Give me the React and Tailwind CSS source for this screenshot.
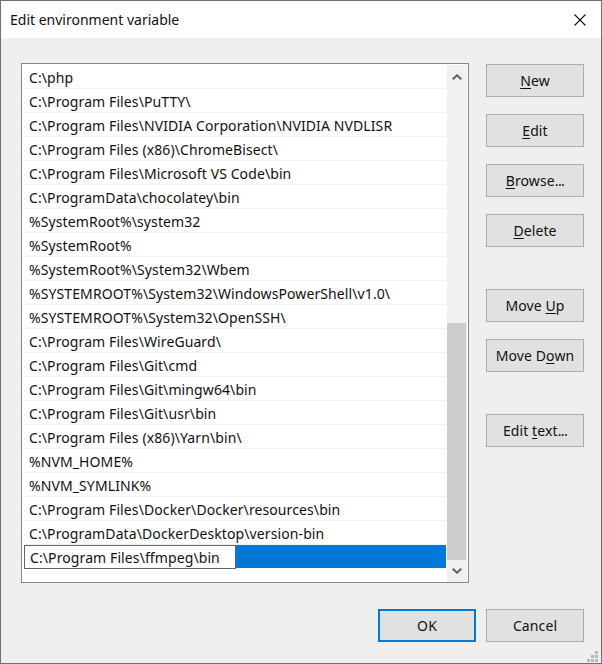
const rows = [
  "C:\\php",
  "C:\\Program Files\\PuTTY\\",
  "C:\\Program Files\\NVIDIA Corporation\\NVIDIA NVDLISR",
  "C:\\Program Files (x86)\\ChromeBisect\\",
  "C:\\Program Files\\Microsoft VS Code\\bin",
  "C:\\ProgramData\\chocolatey\\bin",
  "%SystemRoot%\\system32",
  "%SystemRoot%",
  "%SystemRoot%\\System32\\Wbem",
  "%SYSTEMROOT%\\System32\\WindowsPowerShell\\v1.0\\",
  "%SYSTEMROOT%\\System32\\OpenSSH\\",
  "C:\\Program Files\\WireGuard\\",
  "C:\\Program Files\\Git\\cmd",
  "C:\\Program Files\\Git\\mingw64\\bin",
  "C:\\Program Files\\Git\\usr\\bin",
  "C:\\Program Files (x86)\\Yarn\\bin\\",
  "%NVM_HOME%",
  "%NVM_SYMLINK%",
  "C:\\Program Files\\Docker\\Docker\\resources\\bin",
  "C:\\ProgramData\\DockerDesktop\\version-bin",
];

function Btn({ children, className = "", primary }) {
  return (
    <button
      className={`w-[98px] h-[33px] shrink-0 flex items-center justify-center bg-[#e1e1e1] text-[#111] tracking-[0.1px] ${
        primary ? "border-2 border-[#0078d7]" : "border border-[#adadad]"
      } ${className}`}
    >
      <span>{children}</span>
    </button>
  );
}

function Key({ children }) {
  return <u className="underline underline-offset-2 decoration-1">{children}</u>;
}

function Dots() {
  return <span className="tracking-[-0.6px]">...</span>;
}

function Grip() {
  const dots = [[9, 0], [9, 4], [5, 4], [9, 8], [5, 8], [1, 8]];
  return (
    <svg className="absolute right-[3px] bottom-[1px]" width="12" height="11" viewBox="0 0 12 11">
      {dots.map(([x, y]) => (
        <rect key={`${x}-${y}`} x={x} y={y} width="3" height="3" fill="#b8b8b8" />
      ))}
    </svg>
  );
}

export default function App() {
  return (
    <div
      className="relative w-[602px] h-[664px] flex flex-col border border-[#707070] bg-[#efefef] text-[14px] text-[#111] overflow-hidden"
      style={{ fontFamily: '"Noto Sans", sans-serif' }}
    >
      {/* title bar */}
      <div className="h-[37px] shrink-0 bg-white flex items-center justify-between pl-[9px] pr-[15px]">
        <span className="text-[#111]">Edit environment variable</span>
        <svg width="12" height="12" viewBox="0 0 12 12" stroke="#111" strokeWidth="1.1">
          <path d="M0.5 0.5 L11.5 11.5 M11.5 0.5 L0.5 11.5" />
        </svg>
      </div>

      <div className="flex pl-[20px] pt-[25px]">
        {/* list box */}
        <div className="w-[448px] h-[520px] shrink-0 border border-[#828790] bg-white flex">
          <div className="w-[424px] mr-[1px] shrink-0 pt-[1px] tracking-[0.1px]">
            {rows.map((r) => (
              <div
                key={r}
                className="h-[24px] pl-[7px] pt-[1px] flex items-center border-b border-[#f0f0f0] whitespace-nowrap"
              >
                {r}
              </div>
            ))}
            <div className="flex pl-[2px]">
              <div className="w-[212px] h-[24px] shrink-0 pl-[5px] flex items-center bg-white border border-[#646464]">
                C:\Program Files\ffmpeg\bin
              </div>
              <div className="flex-1 h-[23px] bg-[#0078d7]"></div>
            </div>
          </div>
          {/* scrollbar */}
          <div className="w-[20px] h-[517px] mt-[1px] bg-[#f0f0f0] flex flex-col">
            <div className="h-[24px] shrink-0 flex items-center justify-center pr-[1px]">
              <svg width="10" height="6" viewBox="0 0 10 6" fill="none" stroke="#606060" strokeWidth="2">
                <path d="M0.7 5.3 L5 1.3 L9.3 5.3" />
              </svg>
            </div>
            <div className="h-[234px] shrink-0"></div>
            <div className="w-[19px] h-[237px] shrink-0 bg-[#cdcdcd]"></div>
            <div className="flex-1 flex items-center justify-center pr-[1px]">
              <svg width="10" height="6" viewBox="0 0 10 6" fill="none" stroke="#606060" strokeWidth="2">
                <path d="M0.7 0.7 L5 4.7 L9.3 0.7" />
              </svg>
            </div>
          </div>
        </div>

        {/* side buttons */}
        <div className="ml-[17px] mt-[1px] flex flex-col">
          <Btn><Key>N</Key>ew</Btn>
          <Btn className="mt-[17px]"><Key>E</Key>dit</Btn>
          <Btn className="mt-[17px]"><Key>B</Key>rowse<Dots /></Btn>
          <Btn className="mt-[17px]"><Key>D</Key>elete</Btn>
          <Btn className="mt-[42px]">Move <Key>U</Key>p</Btn>
          <Btn className="mt-[17px]">Move D<Key>o</Key>wn</Btn>
          <Btn className="mt-[42px]">Edit <Key>t</Key>ext<Dots /></Btn>
        </div>
      </div>

      {/* footer */}
      <div className="flex justify-end gap-[10px] pr-[17px] mt-[26px]">
        <Btn primary>OK</Btn>
        <Btn>Cancel</Btn>
      </div>

      <Grip />
    </div>
  );
}
